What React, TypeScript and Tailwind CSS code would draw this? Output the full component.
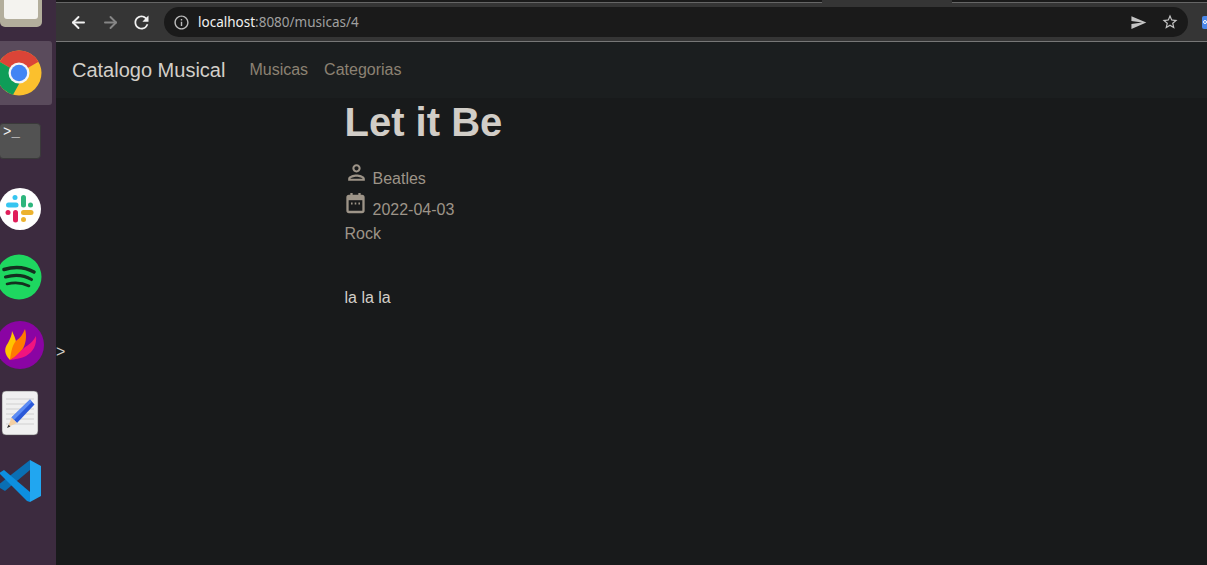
import { LuArrowLeft, LuArrowRight } from "react-icons/lu";
import { MdRefresh, MdInfoOutline, MdOutlineStarBorder, MdSend, MdOutlinePerson } from "react-icons/md";

const FilesIcon = () => (
  <div className="w-[42px] h-[27px] rounded-b-[5px] bg-[#b3ae9c] px-1 pb-2">
    <div className="h-full rounded-b-[3px] bg-[#f4f3ef]" />
  </div>
);

const ChromeIcon = () => (
  <svg width="50" height="50" viewBox="0 0 50 50" className="-ml-[6px]">
    <circle cx="25" cy="25" r="22.5" fill="#fbc02d" />
    <path d="M25 25 L5.5 13.8 A22.5 22.5 0 0 1 44.5 13.8 Z" fill="#db4437" />
    <path d="M25 25 L5.5 13.8 A22.5 22.5 0 0 0 19 46.7 L30 27 Z" fill="#0f9d58" />
    <circle cx="25" cy="25" r="10.5" fill="#f5f5f5" />
    <circle cx="25" cy="25" r="8.2" fill="#4285f4" />
  </svg>
);

const TerminalIcon = () => (
  <div className="w-[42px] h-9 rounded-[4px] border border-[#3a3a3a] bg-[#525252] -ml-px pl-[3px] pt-px font-['Liberation_Mono',monospace] text-sm leading-[15px] text-[#f2f2f2]">
    &gt;_
  </div>
);

const SlackIcon = () => (
  <svg width="42" height="42" viewBox="0 0 42 42">
    <circle cx="21" cy="21" r="21" fill="#fff" />
    <rect x="7" y="14.5" width="12.5" height="5" rx="2.5" fill="#36c5f0" />
    <rect x="13.5" y="7" width="5" height="5" rx="2.5" fill="#36c5f0" />
    <rect x="22" y="7" width="5" height="12.5" rx="2.5" fill="#2eb67d" />
    <rect x="29" y="14.5" width="5" height="5" rx="2.5" fill="#2eb67d" />
    <rect x="22" y="22" width="12.5" height="5" rx="2.5" fill="#ecb22e" />
    <rect x="22" y="29" width="5" height="5" rx="2.5" fill="#ecb22e" />
    <rect x="14" y="22" width="5" height="12.5" rx="2.5" fill="#e01e5a" />
    <rect x="6.5" y="22" width="5" height="5" rx="2.5" fill="#e01e5a" />
  </svg>
);

const SpotifyIcon = () => (
  <svg width="46" height="46" viewBox="0 0 46 46" className="-ml-[4px]">
    <circle cx="23" cy="23" r="22.5" fill="#1ed760" />
    <g fill="none" stroke="#14301f" strokeLinecap="round">
      <path d="M8 15.5 C18 12.5 29 13 38 18" strokeWidth="3.6" />
      <path d="M9.5 23 C18 20.5 28 21 35.5 25.5" strokeWidth="3.1" />
      <path d="M11 30 C18 28.2 26 28.6 33 32" strokeWidth="2.6" />
    </g>
  </svg>
);

const FlameIcon = () => (
  <svg width="48" height="48" viewBox="0 0 48 48" className="-ml-[4px]">
    <circle cx="24" cy="24" r="24" fill="#8a04a3" />
    <path d="M14 39 C8 33 8 27 12 22 C14 18 16 14 16 10 C18 15 21 19 20 25 C19 31 16 35 14 39 Z" fill="#ffc400" />
    <path d="M14 39 C15 30 17 22 21 19 C24 17 27 13 29 8 C31 15 30 23 26 29 C22 34 18 37 14 39 Z" fill="#ff7a00" />
    <path d="M14 39 C20 36 24 30 28 27 C32 24 37 21 40 15 C41 24 37 31 30 35 C24 38 19 38 14 39 Z" fill="#f0147f" />
  </svg>
);

const EditorIcon = () => (
  <svg width="38" height="46" viewBox="0 0 38 46">
    <rect x="1" y="1" width="36" height="44" rx="4" fill="#f0f0f0" stroke="#555" strokeWidth="0.5" />
    <g stroke="#d0d0d0" strokeWidth="1.2">
      <path d="M5 9H33M5 14H33M5 19H33M5 24H33M5 29H33M5 34H33" />
    </g>
    <path d="M29 9.5 L33.5 14.5 L16 33 L10.5 27.5 Z" fill="#2a58d8" />
    <path d="M29 9.5 L31 11.7 L13 30 L10.5 27.5 Z" fill="#5c8cf4" />
    <path d="M10.5 27.5 L16 33 L7 37 Z" fill="#f3cfa3" />
    <path d="M6 38 L7.5 34.8 L9.5 36.6 Z" fill="#333" />
  </svg>
);

const VsCodeIcon = () => (
  <svg width="43" height="43" viewBox="0 0 43 43" className="-ml-[2px]">
    <path d="M32 0 V10 L7 31 L2 28 L0 25 Z" fill="#0a6fb4" />
    <path d="M1 13 L6 10 L32 32 V42 L29 41 Z" fill="#0d8fe0" />
    <path d="M32 0 L43 6 V36 L32 42 Z" fill="#21a6f0" />
  </svg>
);

const Dock = () => (
  <aside className="w-14 h-[565px] shrink-0 overflow-hidden bg-[#3c2b3f] flex flex-col">
    <FilesIcon />
    <div className="mt-3.5 w-[52px] h-16 shrink-0 rounded-r-[3px] bg-[#5a4b5c] flex items-center overflow-hidden">
      <ChromeIcon />
    </div>
    <div className="mt-[18px]">
      <TerminalIcon />
    </div>
    <div className="mt-[29px] -ml-px">
      <SlackIcon />
    </div>
    <div className="mt-[24px]">
      <SpotifyIcon />
    </div>
    <div className="mt-[21px]">
      <FlameIcon />
    </div>
    <div className="mt-[21px] ml-px">
      <EditorIcon />
    </div>
    <div className="mt-[24px]">
      <VsCodeIcon />
    </div>
  </aside>
);

const BrowserBar = () => (
  <div className="h-[42px] shrink-0 bg-[#353535] border-b border-[#777]">
    <div className="flex h-[3px]">
      <div className="w-[766px] bg-[#1a1a1a] border-b border-[#666]" />
      <div className="w-[130px]" />
      <div className="flex-1 bg-[#1a1a1a] border-b border-[#666]" />
    </div>
    <div className="flex items-center h-[38px]">
      <LuArrowLeft className="ml-[13px] text-[#f1f1f1]" size={19} strokeWidth={2.4} />
      <LuArrowRight className="ml-[13px] text-[#868686]" size={19} strokeWidth={2.4} />
      <MdRefresh className="ml-[11px] text-[#f1f1f1]" size={21} />
      <div className="ml-[12px] w-[1024px] h-[30px] rounded-full bg-[#1a1a1a] flex items-center pl-[9px] pr-[9px] font-['Noto_Sans',sans-serif] text-[13.5px]">
        <MdInfoOutline className="text-[#bdbdbd]" size={17} />
        <span className="ml-2 text-[#f1f1f1]">localhost</span>
        <span className="text-[#a0a0a0]">:8080/musicas/4</span>
        <MdSend className="ml-auto text-[#c4c4c4]" size={17} />
        <MdOutlineStarBorder className="ml-3.5 text-[#c4c4c4]" size={18} />
      </div>
      <div className="ml-[14px] w-[5px] h-[13px] rounded-l-[2px] bg-[#4a86e8] flex items-center pl-px">
        <div className="w-1 h-1 rounded-full border border-white" />
      </div>
    </div>
  </div>
);

const CalendarIcon = () => (
  <svg width="22" height="22" viewBox="0 0 22 22" fill="none" stroke="#9d9488" strokeWidth="2.3" className="-ml-px mb-2">
    <rect x="3.5" y="4" width="16" height="16" rx="1.5" />
    <path d="M3.5 6.5H19.5" strokeWidth="3.4" />
    <path d="M7.5 1V4M15.5 1V4" />
    <path d="M7 11.5H8.6M10.7 11.5H12.3M14.4 11.5H16" strokeWidth="1.8" />
  </svg>
);

export default function App() {
  return (
    <div className="flex h-[565px] w-[1207px] overflow-hidden bg-[#181a1b] font-['Liberation_Sans',sans-serif]">
      <Dock />
      <main className="flex-1 flex flex-col min-w-0">
        <BrowserBar />
        <nav className="h-14 shrink-0 bg-[#1b1e1f] flex items-center pl-4">
          <span className="text-xl text-[#d3cfc9]">Catalogo Musical</span>
          <span className="ml-6 text-[#8c8273]">Musicas</span>
          <span className="ml-4 text-[#8c8273]">Categorias</span>
        </nav>
        <section className="pl-[288.5px]">
          <h1 className="text-[40px] leading-[48px] font-bold text-[#d1cdc7]">Let it Be</h1>
          <div className="mt-4 flex items-end h-[29px] text-[#9d9488]">
            <MdOutlinePerson size={25} className="-ml-px mb-[6px]" />
            <span className="ml-1 leading-6">Beatles</span>
          </div>
          <div className="flex items-end h-[31px] text-[#9d9488]">
            <CalendarIcon />
            <span className="ml-[7px] leading-6">2022-04-03</span>
          </div>
          <div className="leading-6 text-[#9d9488]">Rock</div>
          <p className="mt-10 leading-6 text-[#d3cfc9]">la la la</p>
        </section>
        <div className="mt-[30px] leading-6 text-[#d3cfc9]">&gt;</div>
      </main>
    </div>
  );
}
